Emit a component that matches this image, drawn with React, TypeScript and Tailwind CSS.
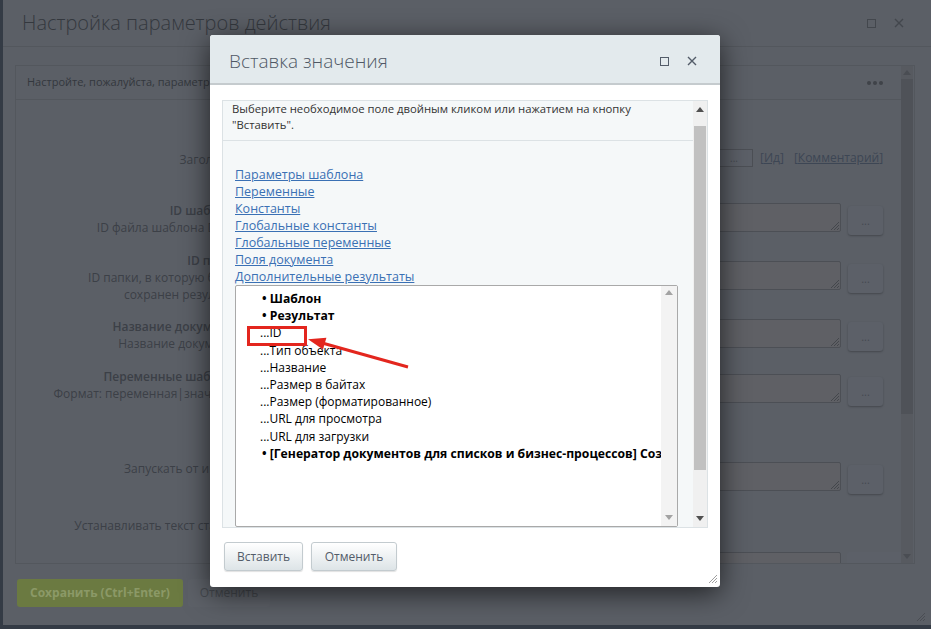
const links = [
  "Параметры шаблона",
  "Переменные",
  "Константы",
  "Глобальные константы",
  "Глобальные переменные",
  "Поля документа",
  "Дополнительные результаты",
];

const items = [
  { text: "• Шаблон", bold: true },
  { text: "• Результат", bold: true },
  { text: "...ID" },
  { text: "...Тип объекта" },
  { text: "...Название" },
  { text: "...Размер в байтах" },
  { text: "...Размер (форматированное)" },
  { text: "...URL для просмотра" },
  { text: "...URL для загрузки" },
  {
    text: "• [Генератор документов для списков и бизнес-процессов] Создание документа",
    bold: true,
  },
];

function Tri({ up, color }: { up?: boolean; color: string }) {
  return (
    <svg width="8" height="5" viewBox="0 0 8 5">
      <polygon points={up ? "0,5 4,0 8,5" : "0,0 8,0 4,5"} fill={color} />
    </svg>
  );
}

function WinIcons({ color }: { color: string }) {
  return (
    <div className="flex items-center gap-[18px]">
      <svg width="9" height="9" viewBox="0 0 9 9">
        <rect x="0.5" y="0.5" width="8" height="8" fill="none" stroke={color} />
      </svg>
      <svg width="10" height="10" viewBox="0 0 10 10">
        <path d="M1 1 L9 9 M9 1 L1 9" stroke={color} strokeWidth="1.4" />
      </svg>
    </div>
  );
}

function Grip({ color }: { color: string }) {
  return (
    <svg width="10" height="10" viewBox="0 0 10 10">
      <path d="M10 2 L2 10 M10 5 L5 10 M10 8 L8 10" stroke={color} strokeWidth="1" />
    </svg>
  );
}

function Area({ mt }: { mt: string }) {
  return (
    <div className={`flex items-start gap-[7px] ${mt}`}>
      <div className="relative h-[29px] w-[591px] rounded-[2px] border border-[#4c4f55] bg-[#5f6065]">
        <div className="absolute bottom-[1px] right-[1px]">
          <Grip color="#44474c" />
        </div>
      </div>
      <div className="mt-[3px] flex h-[29px] w-[35px] items-center justify-center rounded-[3px] bg-[#5c6068] text-[11px] leading-none text-[#454950] shadow-[0_1px_2px_rgba(0,0,0,0.25)]">
        ...
      </div>
    </div>
  );
}

function Label({ lines }: { lines: { t: string; b?: boolean }[] }) {
  return (
    <div className="w-[224px] shrink-0 whitespace-nowrap text-right text-[12px] leading-[17px] text-[#3c4047]">
      {lines.map((l, i) => (
        <div key={i} className={l.b ? "font-semibold" : ""}>
          {l.t}
        </div>
      ))}
    </div>
  );
}

function BackgroundWindow() {
  return (
    <div className="flex h-[625px] w-[928px] flex-col bg-[#5b5f66]">
      <div className="flex h-[47px] shrink-0 items-center justify-between border-b border-[#53575d] pl-[19px] pr-[27px]">
        <span className="text-[20px] font-light text-[#34383e]">Настройка параметров действия</span>
        <WinIcons color="#43474d" />
      </div>
      <div className="pl-[12px] pr-[16px] pt-[18px]">
        <div className="flex h-[499px] border border-[#53575d]">
          <div className="min-w-0 flex-1 overflow-hidden">
            <div className="flex h-[34px] items-center justify-between border-b border-[#53575d] pl-[11px] pr-[18px]">
              <span className="text-[11px] text-[#33373d]">
                Настройте, пожалуйста, параметры действия
              </span>
              <div className="flex gap-[2px]">
                <span className="h-[4px] w-[4px] rounded-full bg-[#3f4349]" />
                <span className="h-[4px] w-[4px] rounded-full bg-[#3f4349]" />
                <span className="h-[4px] w-[4px] rounded-full bg-[#3f4349]" />
              </div>
            </div>

            <div className="mt-[47px] flex h-[26px]">
              <div className="pt-[4px]">
                <Label lines={[{ t: "Заголовок" }]} />
              </div>
              <div className="ml-[10px] mt-[2px] flex h-[18px] items-center">
                <div className="h-[18px] w-[465px] border border-[#4c4f55] bg-[#5f6065]" />
                <div className="flex h-[18px] w-[38px] items-center justify-center border border-[#4c4f55] bg-[#5c6068] text-[10px] text-[#44484f]">
                  ...
                </div>
                <span className="ml-[7px] text-[12px] text-[#3d4654]">
                  [<span className="underline">Ид</span>]
                </span>
                <span className="ml-[10px] text-[12px] text-[#3d4654]">
                  [<span className="underline">Комментарий</span>]
                </span>
              </div>
            </div>

            <div className="mt-[29px] flex h-[50px]">
              <Label lines={[{ t: "ID шаблона", b: true }, { t: "ID файла шаблона DOCX" }]} />
              <div className="ml-[10px]">
                <Area mt="mt-[1px]" />
              </div>
            </div>

            <div className="flex h-[66px]">
              <Label
                lines={[
                  { t: "ID папки", b: true },
                  { t: "ID папки, в которую будет" },
                  { t: "сохранен результат" },
                ]}
              />
              <div className="ml-[10px]">
                <Area mt="mt-[9px]" />
              </div>
            </div>

            <div className="flex h-[50px]">
              <Label lines={[{ t: "Название документа", b: true }, { t: "Название документа" }]} />
              <div className="ml-[10px]">
                <Area mt="mt-[1px]" />
              </div>
            </div>

            <div className="flex h-[92px]">
              <Label
                lines={[{ t: "Переменные шаблона", b: true }, { t: "Формат: переменная|значение" }]}
              />
              <div className="ml-[10px]">
                <Area mt="mt-[6px]" />
              </div>
            </div>

            <div className="flex h-[57px]">
              <Label lines={[{ t: "Запускать от имени" }]} />
              <div className="ml-[10px]">
                <Area mt="mt-[2px]" />
              </div>
            </div>

            <div className="flex">
              <Label lines={[{ t: "Устанавливать текст статуса" }]} />
              <div className="ml-[10px] mt-[35px] flex gap-[6px]">
                <div className="h-[20px] w-[591px] rounded-[2px] border border-[#4c4f55] bg-[#5f6065]" />
                <div className="h-[20px] w-[68px] rounded-[2px] bg-[#5c6068]" />
              </div>
            </div>
          </div>
          <div className="mr-[1px] flex w-[12px] flex-col items-center bg-[#575a60]">
            <div className="flex h-[13px] items-center">
              <Tri up color="#4a4d53" />
            </div>
            <div className="h-[335px] w-full bg-[#4f5258]" />
            <div className="flex-1" />
            <div className="flex h-[14px] items-center">
              <Tri color="#4a4d53" />
            </div>
          </div>
        </div>
      </div>
      <div className="flex gap-[5px] pl-[14px] pt-[15px]">
        <div className="flex h-[28px] w-[166px] items-center justify-center rounded-[3px] bg-[#6b7a41] text-[12px] font-bold text-[#8b9967]">
          Сохранить (Ctrl+Enter)
        </div>
        <div className="flex h-[28px] w-[82px] items-center justify-center rounded-[3px] bg-[#5d6168] text-[12px] text-[#45494f]">
          Отменить
        </div>
      </div>
      <div className="mt-auto flex justify-end pb-[4px] pr-[6px]">
        <Grip color="#4a4d53" />
      </div>
    </div>
  );
}

function InsertDialog() {
  return (
    <div className="absolute left-[210px] top-[35px] flex h-[552px] w-[510px] flex-col rounded-[3px] bg-white shadow-[0_6px_28px_rgba(0,0,0,0.65)]">
      <div className="flex h-[50px] shrink-0 items-center justify-between rounded-t-[3px] border-b-[2px] border-[#c5cbce] bg-[#e3eaed] pl-[19px] pr-[23px] pt-[4px]">
        <span className="text-[19px] font-light text-[#4f5865]">Вставка значения</span>
        <WinIcons color="#535c69" />
      </div>
      <div className="px-[12px] pt-[15px]">
        <div className="flex h-[428px] border border-[#dce2e5] bg-[#f5f8f9]">
          <div className="flex min-w-0 flex-1 flex-col">
            <div className="h-[40px] shrink-0 border-b border-[#dce2e5] pl-[9px] text-[11.3px] leading-[16px] text-[#333]">
              Выберите необходимое поле двойным кликом или нажатием на кнопку
              <br />
              "Вставить".
            </div>
            <div className="flex flex-col items-start pl-[12px] pt-[25px] text-[12.5px] leading-[17px]">
              {links.map((l) => (
                <span key={l} className="text-[#3a70b4] underline">
                  {l}
                </span>
              ))}
            </div>
            <div className="ml-[12px] flex min-h-0 w-[443px] flex-1 rounded-[2px] border border-[#a9a9a9] bg-white">
              <div className="min-w-0 flex-1 overflow-hidden pt-[4px] text-[12px] leading-[17.2px] text-black">
                {items.map((it) => (
                  <div
                    key={it.text}
                    className={
                      it.bold
                        ? "whitespace-nowrap pl-[26px] text-[12.2px] font-bold"
                        : "whitespace-nowrap pl-[24px]"
                    }
                  >
                    {it.text}
                  </div>
                ))}
              </div>
              <div className="flex w-[16px] flex-col items-center bg-[#f3f3f3]">
                <div className="flex h-[13px] items-center">
                  <Tri up color="#a3a3a3" />
                </div>
                <div className="flex-1" />
                <div className="flex h-[18px] items-center">
                  <Tri color="#a3a3a3" />
                </div>
              </div>
            </div>
          </div>
          <div className="flex w-[14px] flex-col items-center bg-[#f0f0f0]">
            <div className="flex h-[17px] items-center">
              <Tri up color="#505050" />
            </div>
            <div className="mt-[8px] h-[344px] w-[12px] bg-[#c1c1c1]" />
            <div className="flex-1" />
            <div className="flex h-[17px] items-center">
              <Tri color="#505050" />
            </div>
          </div>
        </div>
      </div>
      <div className="flex gap-[8px] pl-[14px] pt-[14px]">
        <button className="h-[29px] w-[79px] rounded-[3px] border border-[#c3cbcf] bg-gradient-to-b from-white to-[#dde4e7] text-[12px] text-[#535c69] shadow-[0_1px_1px_rgba(0,0,0,0.12)]">
          Вставить
        </button>
        <button className="h-[29px] w-[86px] rounded-[3px] border border-[#c3cbcf] bg-gradient-to-b from-white to-[#dde4e7] text-[12px] text-[#535c69] shadow-[0_1px_1px_rgba(0,0,0,0.12)]">
          Отменить
        </button>
      </div>

      {/* highlight over the list */}
      <div className="absolute left-[37px] top-[291px] h-[20px] w-[60px] border-[3px] border-[#e3261e]" />
      <svg className="pointer-events-none absolute left-0 top-0" width="510" height="552">
        <line x1="198" y1="332" x2="114" y2="308.5" stroke="#e3261e" strokeWidth="3" />
        <polygon points="98,304.3 116.4,302.8 113,314.5" fill="#e3261e" />
      </svg>
      <div className="absolute bottom-[4px] right-[3px]">
        <Grip color="#a0a0a0" />
      </div>
    </div>
  );
}

export default function App() {
  return (
    <div className="relative h-[629px] w-[931px] overflow-hidden bg-[#343b45] font-['Open_Sans',sans-serif]">
      <div className="pl-[3px]">
        <BackgroundWindow />
      </div>
      <InsertDialog />
    </div>
  );
}
